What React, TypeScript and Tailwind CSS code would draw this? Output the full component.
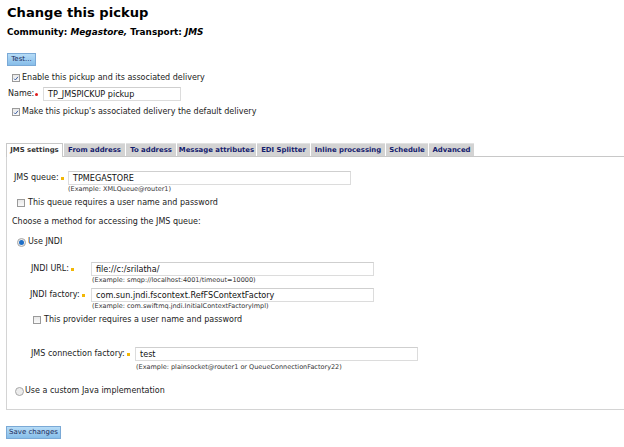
import React from 'react';

// Checkbox drawn as a small box, optional tick
function Check({ checked = false }: { checked?: boolean }) {
  return (
    <span className="inline-flex w-[8px] h-[8px] border border-[#9a9a9a] bg-gradient-to-b from-[#e8e8e8] to-[#fafafa] items-center justify-center shrink-0">
      {checked && (
        <svg viewBox="0 0 8 8" className="w-[7px] h-[7px]">
          <path d="M1.5 4.2 L3.2 6 L6.6 1.8" fill="none" stroke="#2a4f9a" strokeWidth="1.2" />
        </svg>
      )}
    </span>
  );
}

function Radio({ checked = false }: { checked?: boolean }) {
  return (
    <span className="inline-flex w-[9px] h-[9px] rounded-full border border-[#a8a8a8] bg-[#ececec] items-center justify-center shrink-0">
      {checked && <span className="w-[5px] h-[5px] rounded-full bg-[#1f6fc7]" />}
    </span>
  );
}

function Req() {
  return <span className="inline-block w-[3px] h-[3px] bg-[#f2b705] ml-[2px] shrink-0" />;
}

function Field({ value, width }: { value: string; width: number }) {
  return (
    <div
      className="h-[14px] shrink-0 border border-[#dcdcdc] border-t-[#cfcfcf] bg-white flex items-center pl-[4px] text-[8.1px] text-[#111] whitespace-nowrap"
      style={{ width }}
    >
      {value}
    </div>
  );
}

function Example({ text, left }: { text: string; left: number }) {
  return (
    <div className="h-[9px] flex items-center text-[6.5px] text-[#333] whitespace-nowrap" style={{ paddingLeft: left }}>
      {text}
    </div>
  );
}

// label cell spans from panel edge to the input's left edge
function Row({ label, pad, cell, value }: { label: string; pad: number; cell: number; value: string }) {
  return (
    <div className="h-[14px] flex items-center">
      <div className="flex items-center whitespace-nowrap shrink-0" style={{ width: cell, paddingLeft: pad }}>
        <span>{label}</span>
        <Req />
      </div>
      <Field value={value} width={283} />
    </div>
  );
}

const tabs = [
  { label: 'JMS settings', w: 57, active: true },
  { label: 'From address', w: 61 },
  { label: 'To address', w: 50 },
  { label: 'Message attributes', w: 79 },
  { label: 'EDI Splitter', w: 53 },
  { label: 'Inline processing', w: 74 },
  { label: 'Schedule', w: 42 },
  { label: 'Advanced', w: 45 },
];

function BlueButton({ children, w }: { children: React.ReactNode; w: number }) {
  return (
    <div
      className="h-[13px] flex items-center justify-center border border-[#7aa9d6] bg-gradient-to-b from-[#b6dcf7] to-[#86bde9] text-[7px] text-[#1b2a5a]"
      style={{ width: w }}
    >
      {children}
    </div>
  );
}

export default function App() {
  return (
    <div className="w-[624px] h-[447px] overflow-hidden bg-white text-[#222] font-['DejaVu_Sans',Verdana,sans-serif]">
      <div className="pl-[7px]">
        <div className="h-[26px] flex items-center text-[13.1px] font-bold text-black">Change this pickup</div>
        <div className="h-[14px] flex items-center text-[8.9px] font-bold text-black whitespace-nowrap">
          Community:&nbsp;<i>Megastore,</i>&nbsp;Transport:&nbsp;<i>JMS</i>
        </div>
        <div className="mt-[13px]">
          <BlueButton w={29}>Test...</BlueButton>
        </div>
        <div className="mt-[6px] h-[12px] flex items-center gap-[2px] pl-[5px] text-[8px]">
          <Check checked />
          <span>Enable this pickup and its associated delivery</span>
        </div>
        <div className="mt-[3px] h-[14px] flex items-center text-[8px]">
          <span className="pl-[1px] w-[28px]">Name:</span>
          <span className="w-[3px] h-[3px] rounded-full bg-[#e01b1b]" />
          <div className="ml-[5px]">
            <Field value="TP_JMSPICKUP pickup" width={138} />
          </div>
        </div>
        <div className="mt-[5px] h-[12px] flex items-center gap-[2px] pl-[5px] text-[8px]">
          <Check checked />
          <span>Make this pickup's associated delivery the default delivery</span>
        </div>
      </div>

      <div className="mt-[25px] pl-[6px]">
        <div className="flex h-[14px] border-b border-[#c8c8c8]">
          {tabs.map((t) => (
            <div
              key={t.label}
              className={`flex items-center justify-center text-[6.9px] font-bold mr-[1px] whitespace-nowrap ${
                t.active
                  ? 'bg-white text-[#333] border border-b-0 border-[#c8c8c8] h-[14px]'
                  : 'bg-[#d3d3d3] text-[#13206e] border-t border-[#e2e2e2] h-[13px]'
              }`}
              style={{ width: t.w }}
            >
              {t.label}
            </div>
          ))}
        </div>

        <div className="border-l border-b border-[#d4d4d4] pb-[13px] text-[8px]">
          <div className="pt-[14px]">
            <Row label="JMS queue:" pad={7} cell={61} value="TPMEGASTORE" />
          </div>
          <Example text="(Example:  XMLQueue@router1)" left={61} />
          <div className="mt-[4px] h-[10px] flex items-center gap-[3px] pl-[10px]">
            <Check />
            <span>This queue requires a user name and password</span>
          </div>
          <div className="mt-[8px] h-[12px] flex items-center pl-[5px]">Choose a method for accessing the JMS queue:</div>
          <div className="mt-[9px] h-[10px] flex items-center gap-[2px] pl-[10px]">
            <Radio checked />
            <span>Use JNDI</span>
          </div>

          <div className="mt-[15px]">
            <Row label="JNDI URL:" pad={24} cell={84} value="file://c:/srilatha/" />
          </div>
          <Example text="(Example:  smqp://localhost:4001/timeout=10000)" left={85} />
          <div className="mt-[3px]">
            <Row label="JNDI factory:" pad={23} cell={84} value="com.sun.jndi.fscontext.RefFSContextFactory" />
          </div>
          <Example text="(Example:  com.swiftmq.jndi.InitialContextFactoryImpl)" left={85} />
          <div className="mt-[4px] h-[10px] flex items-center gap-[3px] pl-[26px]">
            <Check />
            <span>This provider requires a user name and password</span>
          </div>

          <div className="mt-[22px]">
            <Row label="JMS connection factory:" pad={24} cell={128} value="test" />
          </div>
          <div className="mt-[2px]">
            <Example text="(Example:  plainsocket@router1 or QueueConnectionFactory22)" left={129} />
          </div>
          <div className="mt-[14px] h-[10px] flex items-center gap-[1px] pl-[8px]">
            <Radio />
            <span>Use a custom Java implementation</span>
          </div>
        </div>
      </div>

      <div className="mt-[16px] pl-[6px]">
        <BlueButton w={55}>Save changes</BlueButton>
      </div>
    </div>
  );
}
